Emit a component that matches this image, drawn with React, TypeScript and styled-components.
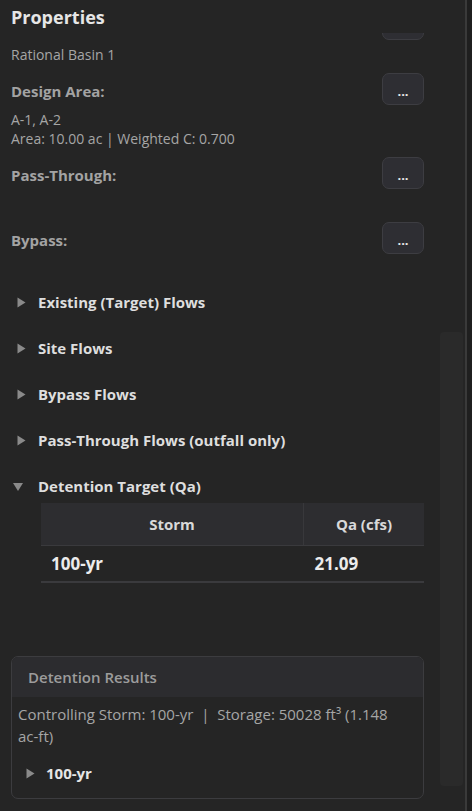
import React, { useLayoutEffect, useRef } from 'react';
import styled, { createGlobalStyle } from 'styled-components';

const GlobalStyle = createGlobalStyle`
    html, body {
        margin: 0;
        padding: 0;
        background: #1f1f1f;
        height: 100%;
    }
    body {
        font-family: "Open Sans", "Noto Sans", sans-serif;
        color: #d4d4d4;
    }
    #root {
        height: 100%;
    }
`;

// the first field is scrolled up under the header, only its button edge shows
const fields = [
    { label: '', values: ['Rational Basin 1'], hidden: true },
    { label: 'Design Area:', values: ['A-1, A-2', 'Area: 10.00 ac | Weighted C: 0.700'] },
    { label: 'Pass-Through:', values: [] },
    { label: 'Bypass:', values: [] },
];

const flows = ['Existing (Target) Flows', 'Site Flows', 'Bypass Flows', 'Pass-Through Flows (outfall only)'];

const targets = [{ storm: '100-yr', qa: '21.09' }];

const Caret = ({ open }: { open?: boolean }) => (
    <CaretIcon viewBox="0 0 10 10" $open={open}>
        <path d="M1.5 0 L9.5 5 L1.5 10 Z" fill="currentColor" />
    </CaretIcon>
);

const App = () => {
    const scrollRef = useRef<HTMLDivElement>(null);

    useLayoutEffect(() => {
        if (scrollRef.current) scrollRef.current.scrollTop = 56;
    }, []);

    return (
        <>
            <GlobalStyle />
            <Page>
                <Panel>
                    <Header>Properties</Header>
                    <Body>
                        <ScrollArea ref={scrollRef}>
                            <Content>
                                {fields.map((f, i) => (
                                    <Field key={i} $empty={f.values.length === 0}>
                                        <FieldHead>
                                            <FieldLabel>{f.label}</FieldLabel>
                                            <DotsButton aria-label="edit">{f.hidden ? '' : '...'}</DotsButton>
                                        </FieldHead>
                                        {f.values.length > 0 && (
                                            <FieldValues>
                                                {f.values.map((v) => (
                                                    <div key={v}>{v}</div>
                                                ))}
                                            </FieldValues>
                                        )}
                                    </Field>
                                ))}

                                <Tree>
                                    {flows.map((name) => (
                                        <TreeItem key={name}>
                                            <Caret />
                                            {name}
                                        </TreeItem>
                                    ))}
                                    <TreeItem>
                                        <Caret open />
                                        Detention Target (Qa)
                                    </TreeItem>
                                    <TargetTable>
                                        <thead>
                                            <tr>
                                                <Th>Storm</Th>
                                                <Th $narrow>Qa (cfs)</Th>
                                            </tr>
                                        </thead>
                                        <tbody>
                                            {targets.map((t) => (
                                                <tr key={t.storm}>
                                                    <Td>{t.storm}</Td>
                                                    <Td $num>{t.qa}</Td>
                                                </tr>
                                            ))}
                                        </tbody>
                                    </TargetTable>
                                </Tree>

                                <ResultsCard>
                                    <CardHeader>Detention Results</CardHeader>
                                    <CardBody>
                                        <Summary>
                                            Controlling Storm: 100-yr&nbsp; |&nbsp; Storage: 50028 ft³ (1.148{' '}
                                            <NoWrap>ac-ft)</NoWrap>
                                        </Summary>
                                        <ResultItem>
                                            <Caret />
                                            100-yr
                                        </ResultItem>
                                    </CardBody>
                                </ResultsCard>
                            </Content>
                        </ScrollArea>
                        <Gutter>
                            <Thumb />
                        </Gutter>
                    </Body>
                </Panel>
            </Page>
        </>
    );
};

export default App;

const Page = styled.div`
    display: flex;
    height: 100%;
`;

const Panel = styled.div`
    width: 465px;
    height: 100%;
    display: flex;
    flex-direction: column;
    background: #252525;
    border-right: 2px solid #3a3a3a;
    overflow: hidden;
`;

const Header = styled.div`
    height: 33px;
    flex-shrink: 0;
    padding: 5px 11px 0;
    box-sizing: border-box;
    font-size: 18px;
    font-weight: 700;
    color: #e6e6e6;
    line-height: 24px;
    background: #252525;
`;

const Body = styled.div`
    flex: 1;
    display: flex;
    min-height: 0;
`;

const ScrollArea = styled.div`
    width: 424px;
    overflow: hidden;
`;

const Content = styled.div`
    padding: 31px 0 120px 11px;
`;

const Field = styled.div<{ $empty?: boolean }>`
    display: flex;
    flex-direction: column;
    margin-bottom: ${(p) => (p.$empty ? '33px' : '9px')};
`;

const FieldHead = styled.div`
    display: flex;
    align-items: center;
    justify-content: space-between;
    height: 32px;
`;

const FieldLabel = styled.span`
    font-size: 15px;
    font-weight: 700;
    color: #a3a3a3;
    padding-top: 3px;
`;

const DotsButton = styled.button`
    width: 42px;
    height: 32px;
    border-radius: 7px;
    border: 1px solid #3d3d42;
    background: #2e2e33;
    color: #e8e8e8;
    font-family: inherit;
    font-size: 13px;
    font-weight: 700;
    padding: 4px 0 0;
    line-height: 1;
`;

const FieldValues = styled.div`
    padding-top: 5px;
    font-size: 14px;
    line-height: 19px;
    color: #a6a6a6;
`;

const Tree = styled.div`
    display: flex;
    flex-direction: column;
`;

const TreeItem = styled.div`
    display: flex;
    align-items: center;
    gap: 12px;
    height: 30px;
    margin-bottom: 16px;
    padding-left: 5px;
    font-size: 15px;
    font-weight: 700;
    color: #dedede;

    &:last-of-type {
        margin-bottom: 0;
    }
`;

const CaretIcon = styled.svg<{ $open?: boolean }>`
    width: 10px;
    height: 11px;
    flex-shrink: 0;
    color: #8a8a8a;
    transform: ${(p) => (p.$open ? 'rotate(90deg) translateY(3px)' : 'none')};
`;

const TargetTable = styled.table`
    margin: 2px 0 0 30px;
    width: 383px;
    border-collapse: collapse;
    font-size: 15px;
`;

const Th = styled.th<{ $narrow?: boolean }>`
    height: 42px;
    padding: 0;
    width: ${(p) => (p.$narrow ? '120px' : 'auto')};
    background: #2d2d30;
    color: #d9d9d9;
    font-weight: 700;
    text-align: center;
    border-bottom: 1px solid #3a3a3d;
    border-right: 1px solid #38383b;

    &:last-child {
        border-right: none;
    }
`;

const Td = styled.td<{ $num?: boolean }>`
    height: 35px;
    padding: 0 0 0 ${(p) => (p.$num ? '11px' : '10px')};
    font-size: 17px;
    font-weight: 700;
    color: #ececec;
    border-bottom: 2px solid #3a3a3d;
`;

const ResultsCard = styled.div`
    margin-top: 73px;
    border: 1px solid #3c3c3f;
    border-radius: 7px;
    overflow: hidden;
`;

const CardHeader = styled.div`
    height: 40px;
    display: flex;
    align-items: center;
    padding-left: 16px;
    background: #2c2c2f;
    font-size: 15px;
    font-weight: 600;
    color: #9c9c9c;
`;

const CardBody = styled.div`
    padding: 6px 6px 10px;
`;

const Summary = styled.div`
    font-size: 15px;
    line-height: 22px;
    color: #a6a6a6;
`;

const NoWrap = styled.span`
    white-space: nowrap;
`;

const ResultItem = styled.div`
    display: flex;
    align-items: center;
    gap: 11px;
    height: 30px;
    margin-top: 11px;
    padding-left: 7px;
    font-size: 15px;
    font-weight: 700;
    color: #e6e6e6;
`;

const Gutter = styled.div`
    flex: 1;
    display: flex;
    justify-content: flex-end;
    padding-right: 2px;
`;

const Thumb = styled.div`
    width: 23px;
    height: 454px;
    margin-top: 299px;
    border-radius: 4px;
    background: #2a2a2a;
`;
